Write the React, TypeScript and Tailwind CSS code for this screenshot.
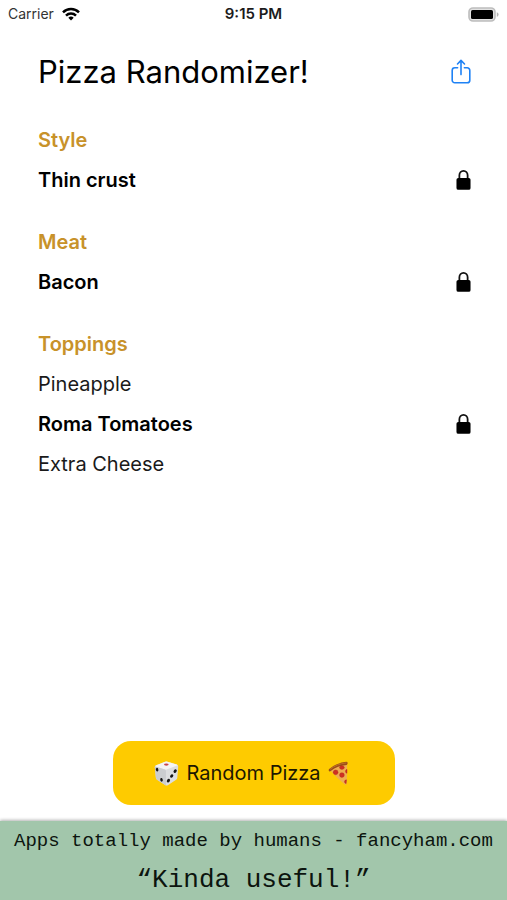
import React from "react";

type Item = { name: string; locked: boolean };
type Section = { title: string; items: Item[] };

const sections: Section[] = [
  { title: "Style", items: [{ name: "Thin crust", locked: true }] },
  { title: "Meat", items: [{ name: "Bacon", locked: true }] },
  {
    title: "Toppings",
    items: [
      { name: "Pineapple", locked: false },
      { name: "Roma Tomatoes", locked: true },
      { name: "Extra Cheese", locked: false },
    ],
  },
];

function WifiIcon() {
  return (
    <svg viewBox="0 0 18 14" className="h-[14px] w-[18px]" aria-hidden="true" fill="none" stroke="#000" strokeWidth="2.5">
      <path d="M1 5.3a11.4 11.4 0 0 1 16 0" />
      <path d="M4 8.6a7.1 7.1 0 0 1 10 0" />
      <path d="M9 13.6 6.3 10.8a3.9 3.9 0 0 1 5.4 0z" fill="#000" stroke="none" />
    </svg>
  );
}

function BatteryIcon() {
  return (
    <svg viewBox="0 0 31 15" className="h-[15px] w-[31px]" aria-hidden="true">
      <rect x="1" y="1" width="26" height="13" rx="4" fill="#e2e2e2" stroke="#bdbdbd" strokeWidth="1.6" />
      <rect x="3" y="3" width="22" height="9" rx="1.6" fill="#000" />
      <path d="M28.8 5.2c1.2.4 1.8 1.3 1.8 2.3s-.6 1.9-1.8 2.3z" fill="#b5b5b5" />
    </svg>
  );
}

function ShareIcon() {
  return (
    <svg viewBox="0 0 20 26" className="h-[26px] w-5" aria-hidden="true" fill="none" stroke="#1f82f5" strokeWidth="1.6" strokeLinecap="round" strokeLinejoin="round">
      <path d="M6.6 8.8H3.8A2.6 2.6 0 0 0 1.2 11.4v9.8A2.6 2.6 0 0 0 3.8 23.8h12.4a2.6 2.6 0 0 0 2.6-2.6V11.4a2.6 2.6 0 0 0-2.6-2.6h-2.8" />
      <path d="M10 15.6V1.6M6.5 5 10 1.4 13.5 5" />
    </svg>
  );
}

function LockIcon() {
  return (
    <svg viewBox="0 0 16 22" className="h-[22px] w-[15px]" aria-hidden="true">
      <path d="M3.6 10.5V6a4.4 4.7 0 0 1 8.8 0v4.5" fill="none" stroke="#111" strokeWidth="1.9" />
      <rect x="0.5" y="8.8" width="15" height="12.6" rx="2" fill="#000" />
    </svg>
  );
}

function DieIcon() {
  return (
    <svg viewBox="0 0 26 26" className="size-[25px]" aria-hidden="true">
      <path d="M2.4 4.4 11.6.8q1.200-.4 2.400 0l9.600 2.800q1.600.6 1.600 2.200L24.200 17.600q-.1 1.200-1.200 2l-8.600 5.600q-1.200.7-2.400 0L3.200 19.600q-1-.7-1.200-1.800L.800 6.600q-.200-1.600 1.600-2.200z" fill="#dddee0" />
      <path d="M2.4 4.4 11.6.8q1.200-.4 2.400 0l9.600 2.800q1 .5.400 1.200L12.400 9 1.600 5.800q-.4-1 .8-1.400z" fill="#f5f5f5" />
      <path d="M1.200 5.600 11.200 8.800q1.200.4 1.200 1.600v15L3.200 19.600q-1-.7-1.200-1.800L.900 6.600z" fill="#cbcdd0" />
      <ellipse cx="12.800" cy="3.700" rx="2.400" ry="1.200" fill="#c9474c" />
      <g fill="#161616">
        <ellipse cx="3.200" cy="9" rx="1.300" ry="1.900" transform="rotate(-15 3.200 9)" />
        <ellipse cx="7.800" cy="19.600" rx="1.300" ry="1.900" transform="rotate(-15 7.800 19.600)" />
        <ellipse cx="22" cy="10.600" rx="1.500" ry="2" transform="rotate(35 22 10.600)" />
        <ellipse cx="18.400" cy="15.600" rx="1.500" ry="2" transform="rotate(35 18.400 15.600)" />
        <ellipse cx="15" cy="20.400" rx="1.500" ry="2" transform="rotate(35 15 20.400)" />
      </g>
    </svg>
  );
}

function PizzaIcon() {
  return (
    <svg viewBox="0 0 22 26" className="h-[25px] w-[21px]" aria-hidden="true">
      <path d="M2 9.4Q9 3.8 20 2.6q.4 11-.6 21.4-.6 1.6-1.8.6Q9.5 18 2 9.4z" fill="#efae50" />
      <path d="M1.3 10.7Q.2 9.6 1.2 8.4 8.2 1.8 19.2.8q1.4 0 1.4 1.4t-1.2 1.8Q9.8 4.8 3.2 10.2q-1 1.1-1.9.5z" fill="#9b4d16" />
      <path d="M2.2 8.6Q9 3 19.4 1.9" fill="none" stroke="#c77a2c" strokeWidth="0.8" />
      <g fill="#cf3022" stroke="#a92318" strokeWidth="0.4">
        <ellipse cx="14.6" cy="6.8" rx="2.5" ry="1.9" />
        <circle cx="8" cy="11.8" r="2.5" />
        <circle cx="14.6" cy="14.6" r="2.5" />
        <path d="M19.9 8.6v4.2q-1.7-.3-1.6-2.1t1.6-2.1zM19.4 19.6l-.4 4q-1.7-.2-1.7-2.1 0-1.8 2.1-1.9z" />
      </g>
    </svg>
  );
}

export default function App() {
  return (
    <div className="flex min-h-screen flex-col bg-white font-['Inter','Liberation_Sans',sans-serif] text-black">
      <header className="grid h-7 grid-cols-3 items-center px-2 text-[14px] leading-5">
        <div className="flex items-center gap-2 text-[#333]">
          <span>Carrier</span>
          <WifiIcon />
        </div>
        <time className="text-center text-[15px] font-semibold text-[#1c1c1c]">9:15 PM</time>
        <div className="flex justify-end">
          <BatteryIcon />
        </div>
      </header>

      <main className="flex grow flex-col px-9">
        <div className="flex h-[88px] items-center justify-between pl-0.5">
          <h1 className="text-[31px] leading-10">Pizza Randomizer!</h1>
          <button type="button" aria-label="Share">
            <ShareIcon />
          </button>
        </div>

        <div className="mt-1 flex flex-col gap-[22px] pl-0.5 text-[20px] leading-10">
          {sections.map((section) => (
            <section key={section.title}>
              <h2 className="font-semibold text-[#c8922a]">{section.title}</h2>
              <ul>
                {section.items.map((item) => (
                  <li key={item.name} className="flex items-center justify-between">
                    <span className={item.locked ? "font-semibold" : "text-[#1a1a1a]"}>{item.name}</span>
                    {item.locked && (
                      <button type="button" aria-label={`Unlock ${item.name}`}>
                        <LockIcon />
                      </button>
                    )}
                  </li>
                ))}
              </ul>
            </section>
          ))}
        </div>

        <button
          type="button"
          className="mx-auto mt-auto mb-4 flex h-16 w-full max-w-[282px] items-center justify-center gap-[7px] rounded-[18px] bg-[#fecb00] pr-1 text-[20px] text-[#1c1700]"
        >
          <DieIcon />
          <span>Random Pizza</span>
          <PizzaIcon />
        </button>
      </main>

      <footer className="flex flex-col items-center bg-[#a2c6ab] pt-1 font-['Liberation_Mono',monospace] whitespace-nowrap text-[#0c140e] shadow-[0_-1px_3px_rgba(0,0,0,0.3)]">
        <p className="text-[19px] leading-8">Apps totally made by humans - fancyham.com</p>
        <p className="pt-1 text-[26px] leading-[39px]">“Kinda useful!”</p>
      </footer>
    </div>
  );
}
